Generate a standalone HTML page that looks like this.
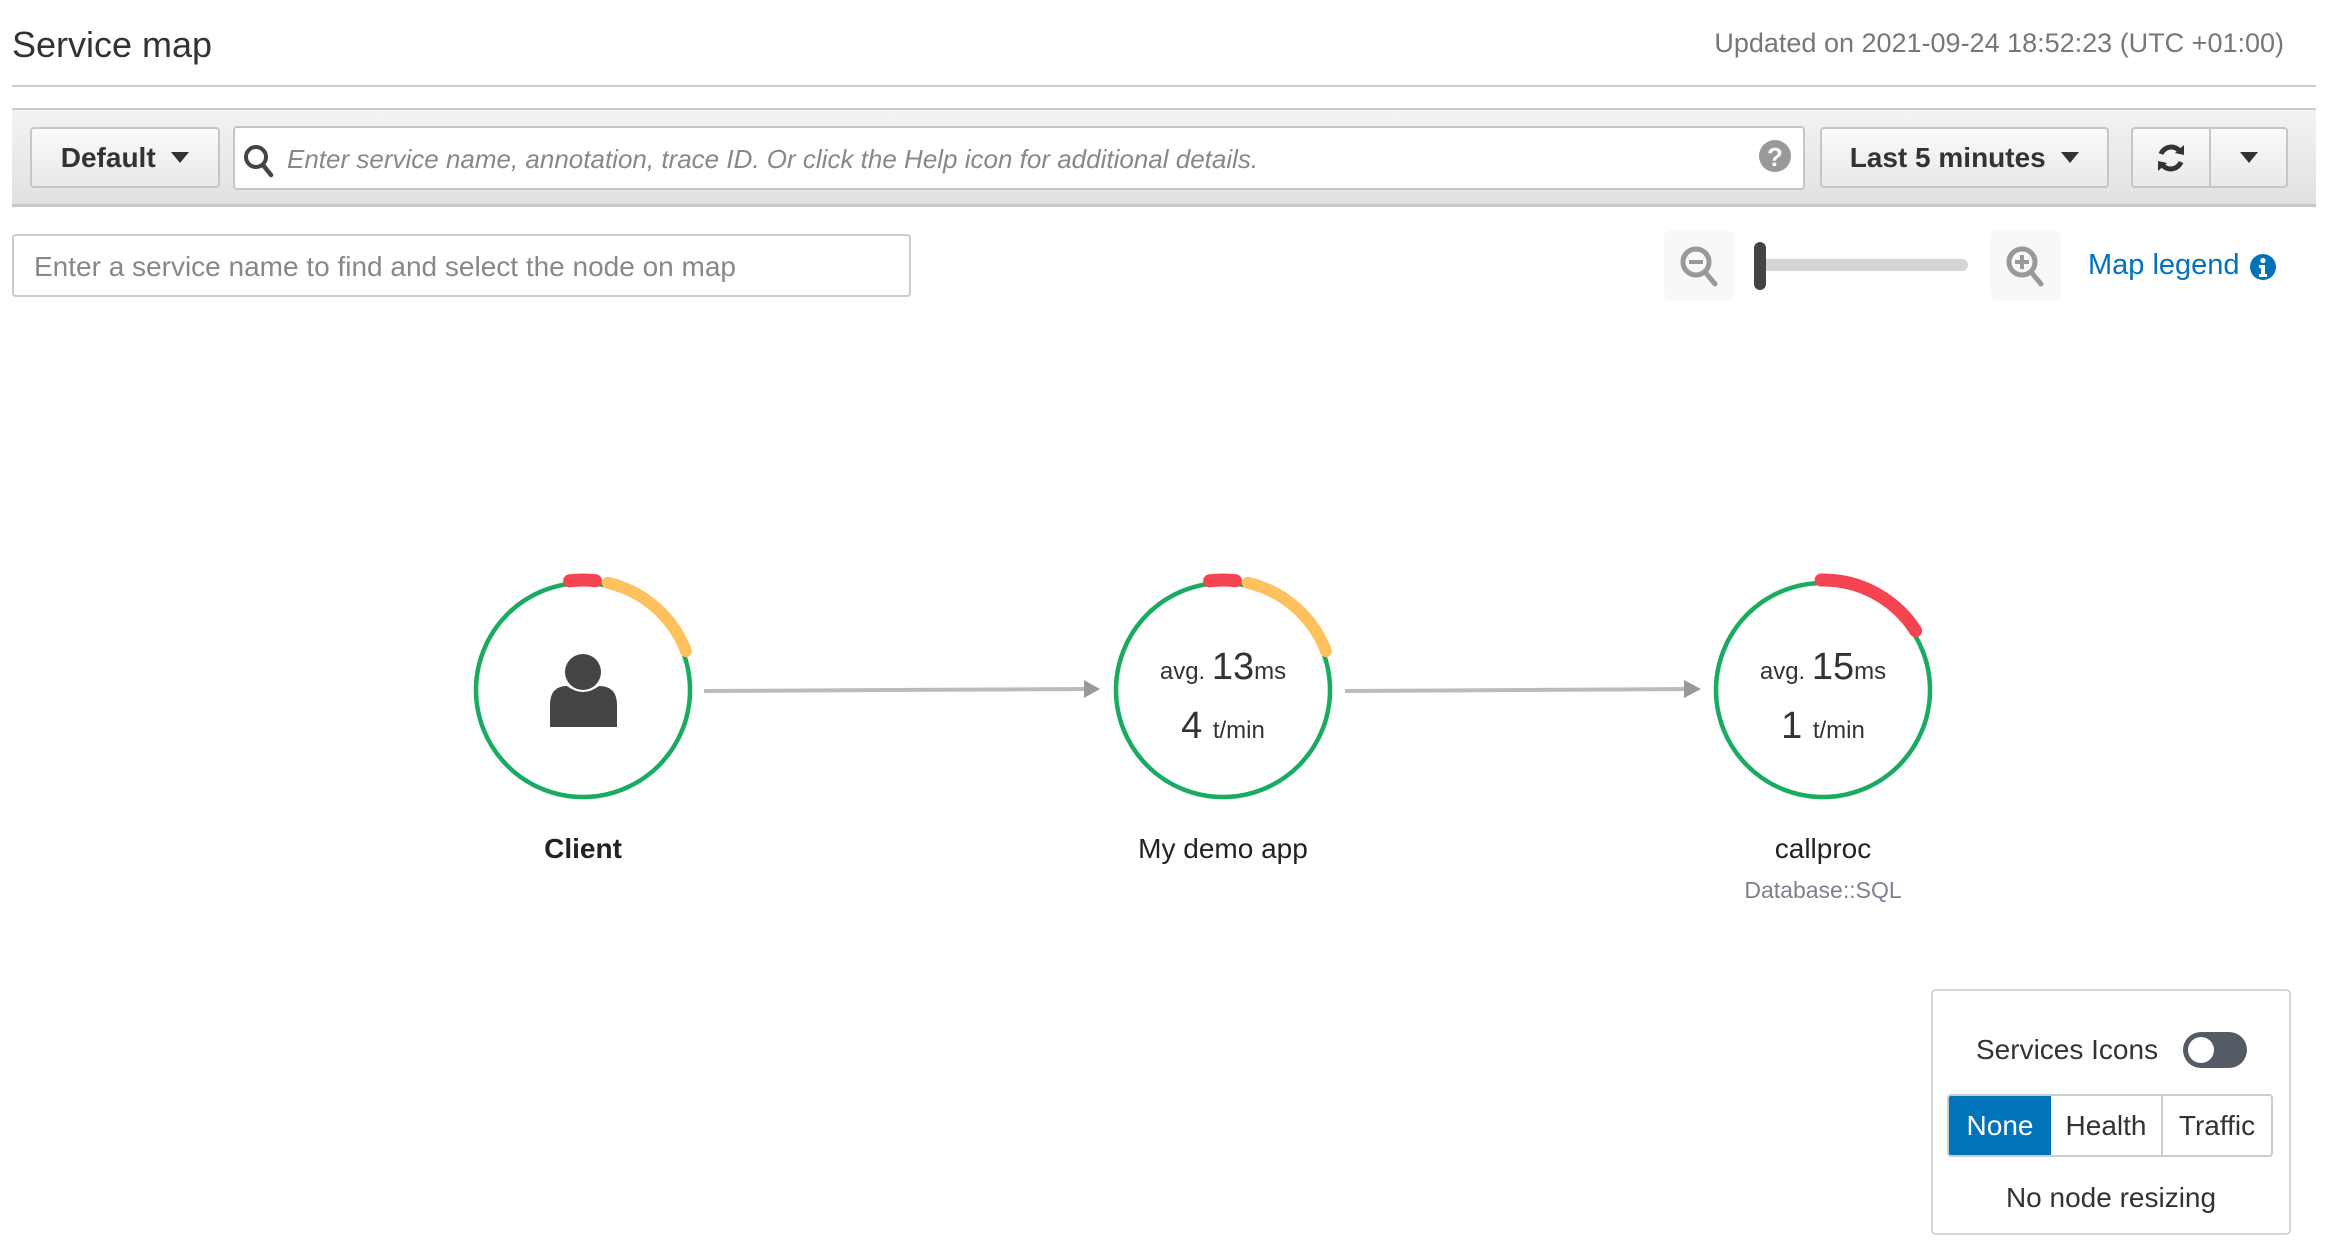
<!DOCTYPE html>
<html><head><meta charset="utf-8"><style>
*{box-sizing:border-box;margin:0;padding:0}
body{width:2326px;height:1260px;background:#fff;font-family:"Liberation Sans",Arial,sans-serif;color:#333;position:relative;overflow:hidden}
.a{position:absolute}
.btn{position:absolute;border:2px solid #c6c6c6;border-radius:4px;background:linear-gradient(#fafafa,#e9e9e9);font-weight:bold;font-size:28px;color:#333;display:flex;align-items:center;justify-content:center}
.tri{display:inline-block;width:0;height:0;border-left:9px solid transparent;border-right:9px solid transparent;border-top:11px solid #333}
</style></head><body>
<div class="a" style="left:12px;top:24px;font-size:36px;color:#333">Service map</div>
<div class="a" style="right:42px;top:28px;font-size:27px;color:#777">Updated on 2021-09-24 18:52:23 (UTC +01:00)</div>
<div class="a" style="left:12px;top:85px;width:2304px;height:2px;background:#ccc"></div>
<div class="a" style="left:12px;top:108px;width:2304px;height:99px;background:linear-gradient(#f2f3f3,#e1e1e1);border-top:2px solid #ccc;border-bottom:3px solid #c8c8c8"></div>
<div class="btn" style="left:30px;top:127px;width:190px;height:61px">Default&nbsp;&nbsp;<span class="tri"></span></div>
<div class="a" style="left:233px;top:126px;width:1572px;height:64px;background:#fff;border:2px solid #c6c6c6;border-radius:4px"></div>
<svg class="a" style="left:242px;top:143px" width="34" height="36" viewBox="0 0 34 36"><circle cx="14" cy="14" r="10" fill="none" stroke="#444" stroke-width="4"/><line x1="21" y1="22" x2="29" y2="32" stroke="#444" stroke-width="4.5" stroke-linecap="round"/></svg>
<div class="a" style="left:287px;top:144px;font-size:26px;font-style:italic;color:#888">Enter service name, annotation, trace ID. Or click the Help icon for additional details.</div>
<svg class="a" style="left:1758px;top:138px" width="34" height="36"><circle cx="17" cy="18" r="16" fill="#999"/><text x="17" y="28" text-anchor="middle" font-family="Liberation Sans" font-weight="bold" font-size="26" fill="#fff">?</text></svg>
<div class="btn" style="left:1820px;top:127px;width:289px;height:61px">Last 5 minutes&nbsp;&nbsp;<span class="tri"></span></div>
<div class="btn" style="left:2131px;top:127px;width:157px;height:61px;justify-content:flex-start">
<div style="width:78px;height:100%;border-right:2px solid #c6c6c6;display:flex;align-items:center;justify-content:center"><svg width="32" height="34" viewBox="0 0 32 34"><path d="M26 12 A11 11 0 0 0 6 13" fill="none" stroke="#333" stroke-width="5"/><path d="M20 12 L29 14 L29 4 Z" fill="#333"/><path d="M6 22 A11 11 0 0 0 26 21" fill="none" stroke="#333" stroke-width="5"/><path d="M12 22 L3 20 L3 30 Z" fill="#333"/></svg></div>
<div style="flex:1;display:flex;align-items:center;justify-content:center"><span class="tri"></span></div></div>
<div class="a" style="left:12px;top:234px;width:899px;height:63px;border:2px solid #ccc;border-radius:4px"></div>
<div class="a" style="left:34px;top:251px;font-size:28px;color:#888">Enter a service name to find and select the node on map</div>
<div class="a" style="left:1664px;top:230px;width:71px;height:71px;background:#f8f8f8;border-radius:8px"></div>
<svg class="a" style="left:1678px;top:244px" width="44" height="46"><circle cx="18" cy="18" r="13" fill="none" stroke="#999" stroke-width="5"/><line x1="11" y1="18" x2="25" y2="18" stroke="#999" stroke-width="4"/><line x1="27" y1="28" x2="37" y2="40" stroke="#999" stroke-width="5" stroke-linecap="round"/></svg>
<div class="a" style="left:1762px;top:259px;width:206px;height:12px;background:#d5d5d5;border-radius:6px"></div>
<div class="a" style="left:1754px;top:242px;width:12px;height:48px;background:#444;border-radius:6px"></div>
<div class="a" style="left:1990px;top:230px;width:71px;height:71px;background:#f8f8f8;border-radius:8px"></div>
<svg class="a" style="left:2004px;top:244px" width="44" height="46"><circle cx="18" cy="18" r="13" fill="none" stroke="#999" stroke-width="5"/><line x1="11" y1="18" x2="25" y2="18" stroke="#999" stroke-width="4"/><line x1="18" y1="11" x2="18" y2="25" stroke="#999" stroke-width="4"/><line x1="27" y1="28" x2="37" y2="40" stroke="#999" stroke-width="5" stroke-linecap="round"/></svg>
<div class="a" style="left:2088px;top:249px;font-size:29px;color:#0073bb">Map legend</div>
<svg class="a" style="left:2249px;top:253px" width="28" height="28"><circle cx="14" cy="14" r="13" fill="#0073bb"/><circle cx="14" cy="7.5" r="2.6" fill="#fff"/><path d="M10 12h6v9h2v3h-8v-3h2v-6h-2z" fill="#fff"/></svg>

<svg class="a" style="left:0;top:0" width="2326" height="1260">
<g fill="none">
<line x1="704" y1="691" x2="1090" y2="689" stroke="#bbb" stroke-width="4"/>
<path d="M1084 680 L1100 689 L1084 698 Z" fill="#999"/>
<line x1="1345" y1="691" x2="1690" y2="689" stroke="#bbb" stroke-width="4"/>
<path d="M1684 680 L1701 689 L1684 698 Z" fill="#999"/>
<circle cx="583" cy="690" r="107" stroke="#1aab63" stroke-width="4.5"/>
<circle cx="583" cy="690" r="110" stroke="#f54451" stroke-width="13" stroke-dasharray="26 1000" transform="rotate(-97 583 690)" stroke-linecap="round"/>
<circle cx="583" cy="690" r="110" stroke="#ffc15e" stroke-width="12" stroke-dasharray="108 1000" transform="rotate(-77 583 690)" stroke-linecap="round"/>
<circle cx="1223" cy="690" r="107" stroke="#1aab63" stroke-width="4.5"/>
<circle cx="1223" cy="690" r="110" stroke="#f54451" stroke-width="13" stroke-dasharray="26 1000" transform="rotate(-97 1223 690)" stroke-linecap="round"/>
<circle cx="1223" cy="690" r="110" stroke="#ffc15e" stroke-width="12" stroke-dasharray="108 1000" transform="rotate(-77 1223 690)" stroke-linecap="round"/>
<circle cx="1823" cy="690" r="107" stroke="#1aab63" stroke-width="4.5"/>
<circle cx="1823" cy="690" r="110" stroke="#f54451" stroke-width="13" stroke-dasharray="112 1000" transform="rotate(-91 1823 690)" stroke-linecap="round"/>
</g>
<circle cx="583" cy="672" r="18" fill="#444"/>
<path d="M550 727 L550 705 Q550 686 567 686 Q583 698 599 686 Q617 686 617 705 L617 727 Z" fill="#444"/>
<g font-family="Liberation Sans" fill="#333" text-anchor="middle">
<text x="1223" y="679"><tspan font-size="24">avg. </tspan><tspan font-size="38">13</tspan><tspan font-size="24">ms</tspan></text>
<text x="1223" y="738"><tspan font-size="38">4 </tspan><tspan font-size="24">t/min</tspan></text>
<text x="1823" y="679"><tspan font-size="24">avg. </tspan><tspan font-size="38">15</tspan><tspan font-size="24">ms</tspan></text>
<text x="1823" y="738"><tspan font-size="38">1 </tspan><tspan font-size="24">t/min</tspan></text>
<text x="583" y="858" font-size="28" font-weight="bold" fill="#222">Client</text>
<text x="1223" y="858" font-size="28" fill="#222">My demo app</text>
<text x="1823" y="858" font-size="28" fill="#222">callproc</text>
<text x="1823" y="898" font-size="23" fill="#7d7f92">Database::SQL</text>
</g>
</svg>

<div class="a" style="left:1931px;top:989px;width:360px;height:246px;border:2px solid #d5d5d5;border-radius:5px"></div>
<div class="a" style="left:1976px;top:1034px;font-size:28px;color:#333">Services Icons</div>
<div class="a" style="left:2183px;top:1032px;width:64px;height:36px;background:#545b64;border-radius:18px"></div>
<div class="a" style="left:2188px;top:1037px;width:26px;height:26px;background:#fff;border-radius:50%"></div>
<div class="a" style="left:1947px;top:1094px;width:326px;height:63px;border:2px solid #ccc;border-radius:4px;display:flex;font-size:28px;overflow:hidden">
<div style="width:102px;background:#0073bb;color:#fff;display:flex;align-items:center;justify-content:center">None</div>
<div style="width:112px;border-right:2px solid #ccc;display:flex;align-items:center;justify-content:center">Health</div>
<div style="flex:1;display:flex;align-items:center;justify-content:center">Traffic</div></div>
<div class="a" style="left:1931px;width:360px;top:1182px;text-align:center;font-size:28px;color:#333">No node resizing</div>
</body></html>
